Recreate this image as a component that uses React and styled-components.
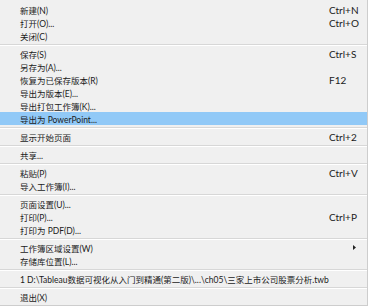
import styled, { createGlobalStyle } from 'styled-components'

const GlobalStyle = createGlobalStyle`
  html, body {
    margin: 0;
    padding: 0;
    background: #ffffff;
  }
`

const Menu = styled.div`
  width: 368px;
  height: 306px;
  box-sizing: border-box;
  padding-top: 3px;
  background: #f0f0f0;
  border-right: 1px solid #cdcdcd;
  border-bottom: 1px solid #cdcdcd;
  font-family: Lato, "Noto Sans CJK SC", sans-serif;
  font-size: 8.5px;
  color: #1b1b1b;
`

const Item = styled.div`
  height: 13px;
  display: flex;
  align-items: center;
  padding: 0 7px 0 20px;
  background: ${props => props.active ? '#91c9f7' : 'transparent'};
  white-space: nowrap;
`

const Label = styled.span`
  flex: 1;
`

const Shortcut = styled.span`
  width: 31px;
  font-size: 10px;
`

const Arrow = styled.span`
  width: 31px;
  display: flex;
  justify-content: flex-end;
  padding-right: 4px;
  box-sizing: border-box;
`

const Separator = styled.div`
  height: 5px;
  display: flex;
  align-items: center;
  &::before {
    content: '';
    flex: 1;
    height: 1px;
    background: #d7d7d7;
    box-shadow: 0 1px 0 #ffffff;
  }
`

const groups = [
  [
    { label: '新建(N)', key: 'Ctrl+N' },
    { label: '打开(O)...', key: 'Ctrl+O' },
    { label: '关闭(C)' },
  ],
  [
    { label: '保存(S)', key: 'Ctrl+S' },
    { label: '另存为(A)...' },
    { label: '恢复为已保存版本(R)', key: 'F12' },
    { label: '导出为版本(E)...' },
    { label: '导出打包工作簿(K)...' },
    { label: '导出为 PowerPoint...', active: true },
  ],
  [{ label: '显示开始页面', key: 'Ctrl+2' }],
  [{ label: '共享...' }],
  [
    { label: '粘贴(P)', key: 'Ctrl+V' },
    { label: '导入工作簿(I)...' },
  ],
  [
    { label: '页面设置(U)...' },
    { label: '打印(P)...', key: 'Ctrl+P' },
    { label: '打印为 PDF(D)...' },
  ],
  [
    { label: '工作簿区域设置(W)', sub: true },
    { label: '存储库位置(L)...' },
  ],
  [{ label: '1 D:\\Tableau数据可视化从入门到精通(第二版)\\...\\ch05\\三家上市公司股票分析.twb' }],
  [{ label: '退出(X)' }],
]

const App = () => {
  return (
    <>
      <GlobalStyle />
      <Menu>
        {groups.map((group, gi) => (
          <div key={gi}>
            {gi > 0 && <Separator />}
            {group.map(item => (
              <Item key={item.label} active={item.active}>
                <Label>{item.label}</Label>
                {item.key && <Shortcut>{item.key}</Shortcut>}
                {item.sub && (
                  <Arrow>
                    <svg width="3" height="5" viewBox="0 0 3 5">
                      <path d="M0 0 L3 2.5 L0 5 Z" fill="#222" />
                    </svg>
                  </Arrow>
                )}
              </Item>
            ))}
          </div>
        ))}
      </Menu>
    </>
  )
}

export default App
